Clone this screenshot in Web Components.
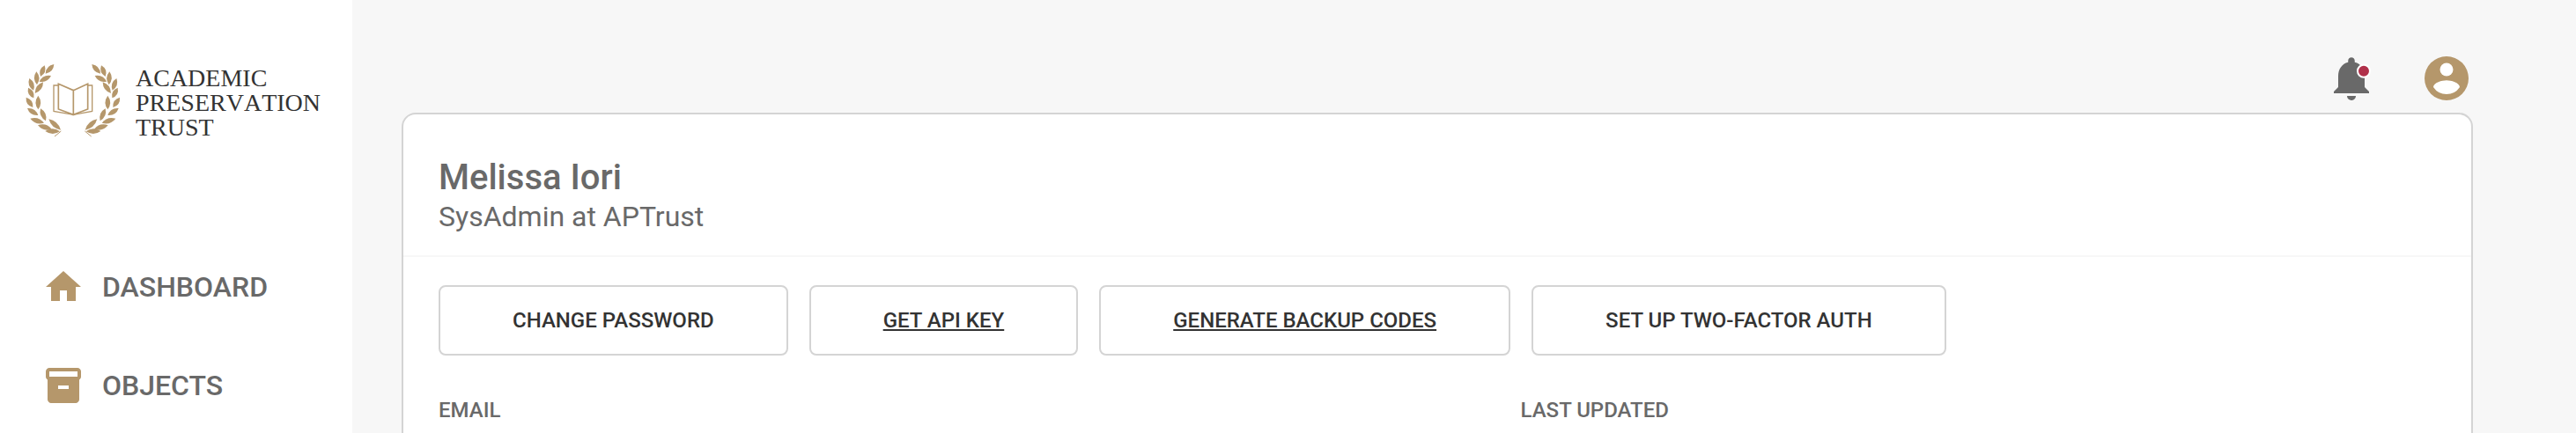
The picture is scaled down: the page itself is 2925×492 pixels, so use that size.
<!DOCTYPE html>
<html lang="en">
<head>
<meta charset="utf-8">
<title>APTrust - Melissa Iori</title>
<style>
  body {margin: 0; background: #f7f7f7; color: #696969; font-family: Roboto, "Liberation Sans", sans-serif;}
</style>
</head>
<body>
<apt-layout>
  <apt-logo slot="sidebar"></apt-logo>
  <apt-nav slot="sidebar">
    <apt-nav-item icon="home" href="#dashboard">DASHBOARD</apt-nav-item>
    <apt-nav-item icon="objects" href="#objects">OBJECTS</apt-nav-item>
  </apt-nav>
  <apt-topbar></apt-topbar>
  <apt-card>
    <span slot="title">Melissa Iori</span>
    <span slot="subtitle">SysAdmin at APTrust</span>
    <apt-button-row>
      <apt-button>CHANGE PASSWORD</apt-button>
      <apt-button href="#api-key">GET API KEY</apt-button>
      <apt-button href="#backup-codes">GENERATE BACKUP CODES</apt-button>
      <apt-button>SET UP TWO-FACTOR AUTH</apt-button>
    </apt-button-row>
    <apt-details>
      <span>EMAIL</span>
      <span>LAST UPDATED</span>
    </apt-details>
  </apt-card>
</apt-layout>

<script>
/**
 * Icons, all drawn on a 24 unit grid
 */
const ICONS = {
  home: '<path d="M10 20v-6h4v6h5v-8h3L12 3 2 12h3v8z"/>',
  objects: '<path d="M20 2H4c-1 0-2 .9-2 2v3.01c0 .72.43 1.34 1 1.69V20c0 1.1 1.1 2 2 2h14c.9 0 2-.9 2-2V8.7c.57-.35 1-.97 1-1.69V4c0-1.1-1-2-2-2zm-5 12H9v-2h6v2zm5-7H4V4h16v3z"/>',
  bell: '<path d="M12 22c1.1 0 2-.9 2-2h-4a2 2 0 0 0 2 2zm6-6v-5c0-3.07-1.64-5.64-4.5-6.32V4c0-.83-.67-1.5-1.5-1.5s-1.5.67-1.5 1.5v.68C7.63 5.36 6 7.92 6 11v5l-2 2v.8h16V18l-2-2z"/><circle cx="17.6" cy="8.7" r="2.8" fill="#b0304a" stroke="#fff" stroke-width=".8"/>',
  account: '<circle cx="12" cy="12" r="10"/><circle cx="12" cy="8" r="3" fill="#fff"/><path d="M12 19.2a7.2 7.2 0 0 1-6-3.22c.03-1.99 4-3.08 6-3.08 1.99 0 5.97 1.09 6 3.08a7.2 7.2 0 0 1-6 3.22z" fill="#fff"/>'
};

function icon(name) {
  return `<svg viewBox="0 0 24 24" fill="currentColor" aria-hidden="true">${ICONS[name]}</svg>`;
}

/**
 * Page frame: white sidebar on the left, content on the right
 */
customElements.define('apt-layout', class extends HTMLElement {
  connectedCallback() {
    const shadow = this.attachShadow({mode: 'open'});
    shadow.innerHTML = `
    <style>
      :host {display: flex; min-height: 100vh;}
      aside {flex: 0 0 400px; background: #fff;}
      main {flex: 1; display: flex; flex-direction: column; padding: 0 4vw 0 56px;}
    </style>
    <aside><slot name="sidebar"></slot></aside>
    <main><slot></slot></main>`;
  }
});

/**
 * Logo: laurel wreath, open book and name
 */
customElements.define('apt-logo', class extends HTMLElement {
  connectedCallback() {
    // base and tip of every leaf in the left branch
    const leaves = [
      [184, 69, 155, 101], [152, 73, 138, 111], [174, 108, 134, 128],
      [124, 94, 126, 139], [147, 130, 119, 168], [100, 117, 114, 158],
      [96, 149, 115, 184], [130, 176, 130, 223], [89, 182, 112, 216],
      [93, 219, 130, 243], [138, 220, 156, 262], [103, 254, 150, 269],
      [166, 256, 207, 293], [129, 277, 176, 290], [154, 297, 204, 298]
    ];
    const branch = leaves.map(([x1, y1, x2, y2]) => {
      const mx = (x1 + x2) / 2, my = (y1 + y2) / 2;
      const len = Math.hypot(x2 - x1, y2 - y1);
      const nx = (y1 - y2) / len * 17, ny = (x2 - x1) / len * 17;
      return `<path d="M${x1} ${y1}Q${mx + nx} ${my + ny} ${x2} ${y2}Q${mx - nx} ${my - ny} ${x1} ${y1}z"/>`;
    }).join('') + '<path d="M186 315L208 297" fill="none" stroke="#b5976b" stroke-width="3"/>';

    const shadow = this.attachShadow({mode: 'open'});
    shadow.innerHTML = `
    <style>
      :host {display: block;}
      a {display: flex; align-items: center; gap: 16px; padding: 72px 28px 0; color: #333; text-decoration: none;
        font: 28px/28px "Liberation Serif", serif; font-kerning: none;}
      svg {flex: none; width: 110px; height: 88px;}
      div {padding-top: 2px;}
      span {display: block;}
    </style>
    <a href="#home">
      <svg viewBox="84 66 330 264" fill="#b5976b" aria-hidden="true">
        <g>${branch}</g>
        <g transform="translate(497 0) scale(-1 1)">${branch}</g>
        <g fill="none" stroke="#b5976b" stroke-width="5">
          <path d="M199 136L250 158V241L199 222zM299 136L250 158V241L299 222z"/>
          <path d="M198 141H183V229L250 241L314 229V141H300" stroke-width="4"/>
        </g>
      </svg>
      <div><span>ACADEMIC</span><span>PRESERVATION</span><span>TRUST</span></div>
    </a>`;
  }
});

customElements.define('apt-nav', class extends HTMLElement {
  connectedCallback() {
    const shadow = this.attachShadow({mode: 'open'});
    shadow.innerHTML = `
    <style>
      :host {display: block; padding-top: 110px;}
      nav {display: flex; flex-direction: column;}
    </style>
    <nav><slot></slot></nav>`;
  }
});

customElements.define('apt-nav-item', class extends HTMLElement {
  connectedCallback() {
    const shadow = this.attachShadow({mode: 'open'});
    shadow.innerHTML = `
    <style>
      :host {display: block;}
      a {display: flex; align-items: center; gap: 20px; padding: 32px 48px; color: #696969; text-decoration: none;
        font-size: 32px; font-weight: 500; line-height: 48px;}
      svg {width: 48px; height: 48px; color: #b5976b;}
    </style>
    <a href="${this.getAttribute('href')}">${icon(this.getAttribute('icon'))}<slot></slot></a>`;
  }
});

/**
 * Alerts and account buttons
 */
customElements.define('apt-topbar', class extends HTMLElement {
  connectedCallback() {
    const shadow = this.attachShadow({mode: 'open'});
    shadow.innerHTML = `
    <style>
      :host {display: flex; justify-content: flex-end; gap: 48px; padding: 59px 0 9px;}
      button {display: block; padding: 0; border: 0; background: none; color: #696969;}
      button.account {color: #b5976b;}
      svg {display: block; width: 60px; height: 60px;}
    </style>
    <button aria-label="Alerts">${icon('bell')}</button>
    <button class="account" aria-label="Account">${icon('account')}</button>`;
  }
});

/**
 * Card that runs on to the bottom of the page
 */
customElements.define('apt-card', class extends HTMLElement {
  connectedCallback() {
    const shadow = this.attachShadow({mode: 'open'});
    shadow.innerHTML = `
    <style>
      :host {flex: 1; display: block; background: #fff; border: 2px solid #d4d4d4; border-bottom: 0; border-radius: 16px 16px 0 0;}
      header {padding: 48px 40px 24px; border-bottom: 2px solid #f7f7f7;}
      h1, p {margin: 0;}
      h1 {font-size: 40px; font-weight: 500; line-height: 48px;}
      p {font-size: 32px; line-height: 40px;}
      section {padding: 32px 40px 0;}
    </style>
    <header>
      <h1><slot name="title"></slot></h1>
      <p><slot name="subtitle"></slot></p>
    </header>
    <section><slot></slot></section>`;
  }
});

customElements.define('apt-button-row', class extends HTMLElement {
  connectedCallback() {
    const shadow = this.attachShadow({mode: 'open'});
    shadow.innerHTML = `
    <style>
      :host {display: flex; flex-wrap: wrap; gap: 24px;}
    </style>
    <slot></slot>`;
  }
});

/**
 * Outlined button, a link when it has an href
 */
customElements.define('apt-button', class extends HTMLElement {
  connectedCallback() {
    const shadow = this.attachShadow({mode: 'open'});
    const href = this.getAttribute('href');
    shadow.innerHTML = `
    <style>
      :host {display: block;}
      a, button {display: block; box-sizing: border-box; margin: 0; padding: 22px 82px; border: 2px solid #d4d4d4; border-radius: 8px;
        background: #fff; color: #333; font: 500 24px/32px Roboto, "Liberation Sans", sans-serif; white-space: nowrap;}
      a {text-decoration: underline;}
    </style>
    ${href ? `<a href="${href}"><slot></slot></a>` : '<button type="button"><slot></slot></button>'}`;
  }
});

customElements.define('apt-details', class extends HTMLElement {
  connectedCallback() {
    const shadow = this.attachShadow({mode: 'open'});
    shadow.innerHTML = `
    <style>
      :host {display: grid; grid-template-columns: 13fr 11fr; padding-top: 46px; font-size: 24px; font-weight: 500; line-height: 32px;}
    </style>
    <slot></slot>`;
  }
});
</script>
</body>
</html>
